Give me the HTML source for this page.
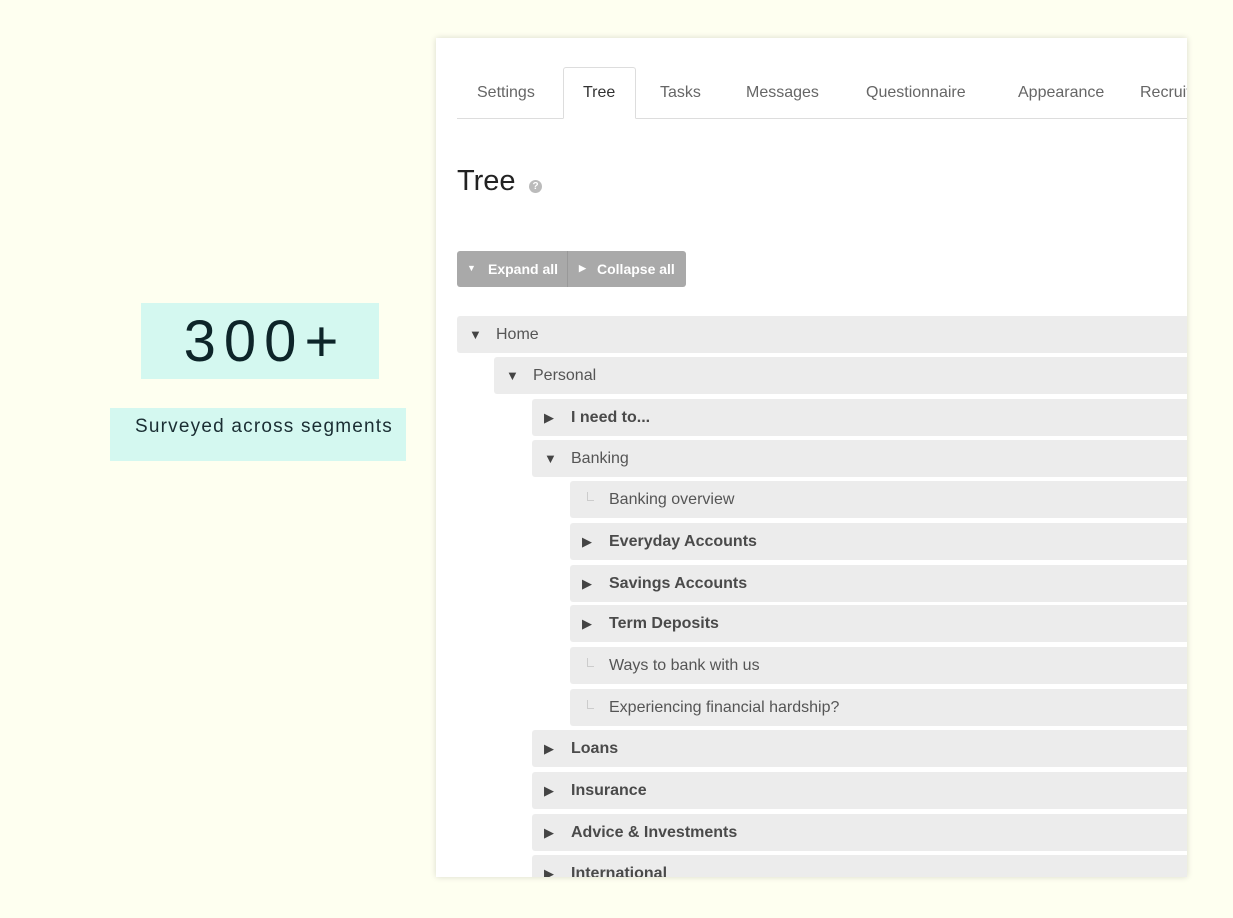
<!DOCTYPE html>
<html><head><meta charset="utf-8"><style>
*{margin:0;padding:0;box-sizing:border-box}
body{width:1233px;height:918px;background:#fefff0;position:relative;overflow:hidden;font-family:"Liberation Sans",sans-serif}
.b1{position:absolute;left:141px;top:303px;width:238px;height:76px;background:#d4f8f0;color:#0d2529;font-size:58px;letter-spacing:8px;text-align:center;line-height:78px;padding-left:10px}
.b2{position:absolute;left:110px;top:408px;width:296px;height:53px;background:#d4f8f0;color:#1a2e33;font-size:19px;letter-spacing:1.2px;padding-left:25px;line-height:38px;white-space:nowrap}
.panel{position:absolute;left:436px;top:38px;width:751px;height:839px;background:#fff;box-shadow:0 0 6px rgba(0,0,0,.15);overflow:hidden}
.tabline{position:absolute;left:21px;top:80px;width:740px;height:1px;background:#ddd}
.tab{position:absolute;top:46px;font-size:16px;color:#666}
.tree-tab{position:absolute;left:127px;top:29px;width:73px;height:52px;border:1px solid #ddd;border-bottom:1px solid #fff;background:#fff;border-radius:3px 3px 0 0}
h1{position:absolute;left:21px;top:127px;font-size:29px;font-weight:normal;color:#222}
.q{position:absolute;left:93px;top:142px;width:13px;height:13px;border-radius:50%;background:#bbb;color:#fff;font-size:10px;font-weight:bold;text-align:center;line-height:13px}
.btns{position:absolute;left:21px;top:213px;width:229px;height:36px;background:#a9a9a9;border-radius:3px;color:#fff;font-size:14px;font-weight:bold}
.btns span{position:absolute;top:10px}
.row{position:absolute;height:37px;right:0;background:#ececec;border-radius:3px 0 0 3px;font-size:16px;color:#555;line-height:37px}
.row b{font-weight:bold;color:#4a4a4a}
.ar{position:absolute;top:0;left:12px;color:#444;font-size:13px}
.t{position:absolute;left:39px;top:0;white-space:nowrap}
.l{position:absolute;left:17px;top:11px;width:7px;height:9px;border-left:1px solid #ccc;border-bottom:1px solid #ccc}
</style></head><body>
<div class="b1">300+</div>
<div class="b2">Surveyed across segments</div>
<div class="panel">
<div class="tabline"></div>
<div class="tree-tab"></div>
<div class="tab" style="left:41px">Settings</div>
<div class="tab" style="left:147px;color:#333">Tree</div>
<div class="tab" style="left:224px">Tasks</div>
<div class="tab" style="left:310px">Messages</div>
<div class="tab" style="left:430px">Questionnaire</div>
<div class="tab" style="left:582px">Appearance</div>
<div class="tab" style="left:704px">Recruit</div>
<h1>Tree</h1><div class="q">?</div>
<div class="btns"><span style="left:10px;font-size:9px;top:12px">▼</span><span style="left:31px">Expand all</span><div style="position:absolute;left:110px;top:0;width:1px;height:36px;background:#999"></div><span style="left:122px;font-size:9px;top:12px">▶</span><span style="left:140px">Collapse all</span></div>

<div class="row" style="left:21px;top:278px"><span class="ar">▼</span><span class="t">Home</span></div>
<div class="row" style="left:58px;top:319px"><span class="ar">▼</span><span class="t">Personal</span></div>
<div class="row" style="left:96px;top:361px"><span class="ar">▶</span><span class="t"><b>I need to...</b></span></div>
<div class="row" style="left:96px;top:402px"><span class="ar">▼</span><span class="t">Banking</span></div>
<div class="row" style="left:134px;top:443px"><span class="l"></span><span class="t">Banking overview</span></div>
<div class="row" style="left:134px;top:485px"><span class="ar">▶</span><span class="t"><b>Everyday Accounts</b></span></div>
<div class="row" style="left:134px;top:527px"><span class="ar">▶</span><span class="t"><b>Savings Accounts</b></span></div>
<div class="row" style="left:134px;top:567px"><span class="ar">▶</span><span class="t"><b>Term Deposits</b></span></div>
<div class="row" style="left:134px;top:609px"><span class="l"></span><span class="t">Ways to bank with us</span></div>
<div class="row" style="left:134px;top:651px"><span class="l"></span><span class="t">Experiencing financial hardship?</span></div>
<div class="row" style="left:96px;top:692px"><span class="ar">▶</span><span class="t"><b>Loans</b></span></div>
<div class="row" style="left:96px;top:734px"><span class="ar">▶</span><span class="t"><b>Insurance</b></span></div>
<div class="row" style="left:96px;top:776px"><span class="ar">▶</span><span class="t"><b>Advice &amp; Investments</b></span></div>
<div class="row" style="left:96px;top:817px"><span class="ar">▶</span><span class="t"><b>International</b></span></div>
</div>
</body></html>
